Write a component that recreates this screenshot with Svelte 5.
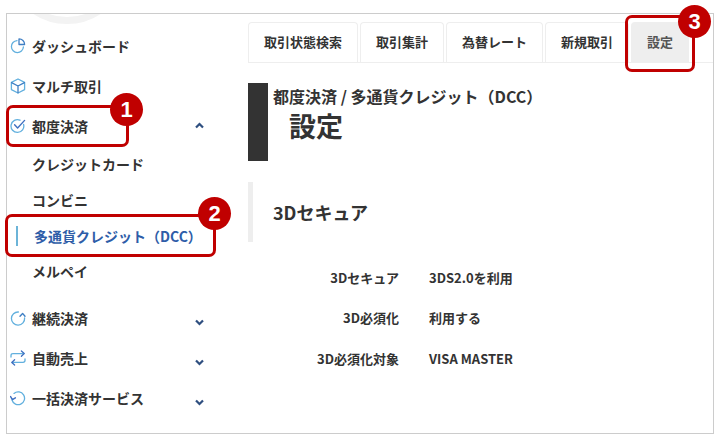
<script>
  const navTop = [
    { label: 'ダッシュボード', icon: 'clock' },
    { label: 'マルチ取引', icon: 'cube' }
  ];
  const subItems = ['クレジットカード', 'コンビニ'];
  const navBottom = [
    { label: '継続決済', icon: 'cycle' },
    { label: '自動売上', icon: 'swap' },
    { label: '一括決済サービス', icon: 'undo' },
    { label: 'レポート', icon: 'list' }
  ];
  const tabs = ['取引状態検索', '取引集計', '為替レート', '新規取引', '設定'];
  const rows = [
    ['3Dセキュア', '3DS2.0を利用'],
    ['3D必須化', '利用する'],
    ['3D必須化対象', 'VISA MASTER']
  ];
</script>

{#snippet icon(name)}
  <svg class="icon" viewBox="0 0 16 16" fill="none" stroke-width="1.3" stroke-linecap="round" stroke-linejoin="round">
    {#if name === 'clock'}
      <path d="M7 2.6a6 6 0 1 0 6.4 6.4" stroke="#62b0de" />
      <path d="M9 .9v5.6h5.6A5.6 5.6 0 0 0 9 .9z" stroke="#3f7fc4" />
    {:else if name === 'cube'}
      <path d="M8 1l6.6 3.4v7.2L8 15l-6.6-3.4V4.4z" stroke="#62b0de" />
      <path d="M1.6 4.6L8 8l6.4-3.4M8 8v6.8" stroke="#3f7fc4" />
    {:else if name === 'check'}
      <path d="M13.6 6.4A6.4 6.4 0 1 1 10 2.2" stroke="#62b0de" />
      <path d="M4.6 6.8L7.6 10 14.6 2.4" stroke="#3f6fc0" stroke-width="1.4" />
    {:else if name === 'cycle'}
      <path d="M8.4 2A6.6 6.6 0 1 0 14.6 8" stroke="#62b0de" />
      <path d="M10 6.2L12.6 3.4 15 6.2" stroke="#3f7fc4" stroke-width="1.4" />
    {:else if name === 'swap'}
      <path d="M1 7V5.4Q1 3.6 3 3.6H14" stroke="#62b0de" />
      <path d="M11.4 1L14.2 3.6 11.4 6.2" stroke="#3f6fc0" />
      <path d="M15 9V10.6Q15 12.4 13 12.4H2" stroke="#62b0de" />
      <path d="M4.6 9.8L1.8 12.4 4.6 15" stroke="#3f6fc0" />
    {:else if name === 'undo'}
      <path d="M4 3.4A6.4 6.4 0 1 1 2 10" stroke="#62b0de" />
      <path d="M.6 6.6L2.4 9.6 5.4 7.8" stroke="#3f6fc0" stroke-width="1.4" />
    {:else if name === 'list'}
      <path d="M1.5 1.6H6.5" stroke="#3f6fc0" />
      <path d="M8 1.6H13.5" stroke="#62b0de" />
    {/if}
  </svg>
{/snippet}

{#snippet chevron(up)}
  <svg class="chev" viewBox="0 0 9 7" fill="none" stroke="#2f4f80" stroke-width="2.2">
    <path d={up ? 'M1 5.6L4.5 2 8 5.6' : 'M1 1.4L4.5 5 8 1.4'} />
  </svg>
{/snippet}

<div class="page">
  <div class="frame">
    <aside class="side">
      <div class="logo-arc"></div>
      <nav class="nav">
        {#each navTop as item}
          <div class="item">{@render icon(item.icon)}<span>{item.label}</span></div>
        {/each}
        <div class="item open">{@render icon('check')}<span>都度決済</span>{@render chevron(true)}</div>
        {#each subItems as sub}
          <div class="sub">{sub}</div>
        {/each}
        <div class="sub current"><i></i>多通貨クレジット（DCC）</div>
        <div class="sub">メルペイ</div>
        <div class="gap"></div>
        {#each navBottom as item}
          <div class="item">{@render icon(item.icon)}<span>{item.label}</span>{@render chevron(false)}</div>
        {/each}
      </nav>
    </aside>

    <main class="main">
      <div class="tabs">
        {#each tabs as tab, i}
          <div class="tab" class:active={i === tabs.length - 1}>{tab}</div>
        {/each}
      </div>

      <header class="title">
        <p>都度決済 / 多通貨クレジット（DCC）</p>
        <h1>設定</h1>
      </header>

      <h2 class="section">3Dセキュア</h2>

      <dl class="rows">
        {#each rows as [k, v]}
          <dt>{k}</dt>
          <dd>{v}</dd>
        {/each}
      </dl>
    </main>
  </div>

  <!-- callouts sit over the page content -->
  <div class="mark m1"></div>
  <div class="mark m2"></div>
  <div class="mark m3"></div>
  <div class="num n1">1</div>
  <div class="num n2">2</div>
  <div class="num n3">3</div>
</div>

<style>
  :global(body) {
    margin: 0;
    background: #fff;
  }

  .page {
    position: relative;
    width: 719px;
    height: 439px;
    overflow: hidden;
    font-family: "Noto Sans CJK JP", "Noto Sans", sans-serif;
    font-weight: 700;
    color: #333;
  }

  .frame {
    box-sizing: border-box;
    margin: 13px 0 0 6px;
    width: 708px;
    height: 421px;
    border: 1px solid #ccc;
    display: flex;
    overflow: hidden;
  }

  .side {
    width: 241px;
    flex: none;
    position: relative;
  }

  .logo-arc {
    position: absolute;
    left: -1px;
    top: -112px;
    box-sizing: border-box;
    width: 122px;
    height: 122px;
    border: 7px solid #f3f3f3;
    border-radius: 50%;
  }

  .nav {
    padding-top: 12px;
    display: flex;
    flex-direction: column;
    font-size: 14px;
  }

  .item {
    height: 40px;
    display: flex;
    align-items: center;
    padding-left: 3px;
    position: relative;
    white-space: nowrap;
  }

  .item:last-child {
    margin-top: 3px;
  }

  .item span {
    margin-left: 6px;
  }

  .icon {
    width: 16px;
    height: 16px;
    flex: none;
  }

  .chev {
    position: absolute;
    left: 188px;
    top: 21px;
    width: 9px;
    height: 7px;
  }

  .open .chev {
    top: 16px;
  }

  .sub {
    height: 36px;
    display: flex;
    align-items: center;
    padding-left: 25px;
    white-space: nowrap;
    position: relative;
  }

  .current {
    color: #2e5da8;
    padding-left: 27px;
    margin-bottom: -1px;
  }

  .current i {
    position: absolute;
    left: 9px;
    top: 8px;
    width: 2px;
    height: 20px;
    background: #6cb4d8;
  }

  .gap {
    height: 9px;
  }

  .main {
    flex: 1;
    min-width: 0;
  }

  .tabs {
    display: flex;
    gap: 2px;
    padding: 8px 0 0;
    border-bottom: 1px solid #eee;
    height: 40px;
  }

  .tab {
    box-sizing: border-box;
    height: 41px;
    padding: 0 15px;
    border: 1px solid #eee;
    border-bottom: none;
    border-radius: 4px 4px 0 0;
    font-size: 13px;
    line-height: 37px;
    white-space: nowrap;
  }

  .active {
    background: #eee;
    color: #555;
  }

  .title {
    margin: 20px 0 0;
    height: 78px;
    border-left: 20px solid #333;
    padding-left: 5px;
  }

  .title p {
    margin: 0;
    font-size: 16px;
    line-height: 26px;
  }

  .title h1 {
    margin: 0 0 0 16px;
    font-size: 27px;
    line-height: 34px;
    font-weight: 700;
  }

  .section {
    margin: 21px 0 0;
    height: 60px;
    border-left: 5px solid #eee;
    padding-left: 20px;
    font-size: 18px;
    line-height: 60px;
    font-weight: 700;
  }

  .rows {
    margin: 15.7px 0 0;
    display: grid;
    grid-template-columns: 151px auto;
    column-gap: 30px;
    grid-auto-rows: 40.5px;
    font-size: 13px;
    line-height: 40px;
  }

  .rows dt {
    text-align: right;
  }

  .rows dd {
    margin: 0;
  }

  .mark {
    position: absolute;
    box-sizing: border-box;
    border: 3px solid #c00000;
    border-radius: 7px;
  }

  .m1 {
    left: 6px;
    top: 105px;
    width: 123px;
    height: 42px;
  }

  .m2 {
    left: 5px;
    top: 214px;
    width: 211px;
    height: 43px;
  }

  .m3 {
    left: 625px;
    top: 15px;
    width: 70px;
    height: 57px;
  }

  .num {
    position: absolute;
    width: 33px;
    height: 33px;
    border-radius: 50%;
    background: #c00000;
    color: #fff;
    font-family: "Liberation Sans", sans-serif;
    font-size: 22px;
    font-weight: 700;
    line-height: 33px;
    text-align: center;
  }

  .n1 {
    left: 110px;
    top: 93px;
  }

  .n2 {
    left: 198px;
    top: 197px;
  }

  .n3 {
    left: 678px;
    top: 5px;
  }
</style>
